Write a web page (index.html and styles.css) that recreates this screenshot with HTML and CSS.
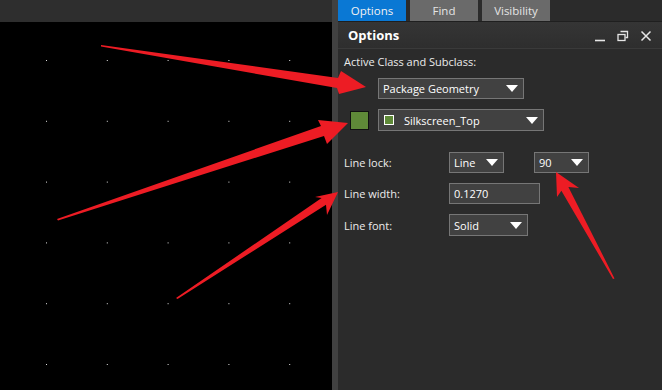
FILE: index.html
```html
<!DOCTYPE html>
<html lang="en">
<head>
    <meta charset="UTF-8">
    <meta name="viewport" content="width=device-width, initial-scale=1.0">
    <title>Options</title>
    <link rel="stylesheet" href="styles.css">
</head>
<body>
    <div class="app">
        <div class="work">
            <div class="topbar"></div>
            <div class="canvas">
                <svg class="grid" width="332" height="368">
                    <defs>
                        <pattern id="dots" x="46" y="38" width="60.8" height="60.8" patternUnits="userSpaceOnUse">
                            <rect x="0" y="0" width="1" height="1" fill="#e0e0e0"/>
                        </pattern>
                    </defs>
                    <rect width="332" height="368" fill="url(#dots)"/>
                </svg>
            </div>
        </div>

        <div class="divider"></div>

        <div class="panel">
            <div class="tabs">
                <div class="tab active">Options</div>
                <div class="tab">Find</div>
                <div class="tab">Visibility</div>
            </div>

            <div class="panel-head">
                <span class="panel-title">Options</span>
                <div class="win-btns">
                    <svg width="12" height="12" viewBox="0 0 12 12"><path d="M1 10.5h10" stroke="#e6e6e6" stroke-width="1.6"/></svg>
                    <svg width="12" height="12" viewBox="0 0 12 12">
                        <path d="M3.5 1.5h7v6h-2" fill="none" stroke="#e6e6e6" stroke-width="1.3"/>
                        <rect x="1" y="4.5" width="7" height="6" fill="none" stroke="#e6e6e6" stroke-width="1.3"/>
                    </svg>
                    <svg width="12" height="12" viewBox="0 0 12 12"><path d="M1.5 1.5l9 9M10.5 1.5l-9 9" stroke="#e6e6e6" stroke-width="1.5"/></svg>
                </div>
            </div>

            <div class="body">
                <div class="caption">Active Class and Subclass:</div>

                <div class="select wide-1">
                    <span>Package Geometry</span>
                    <i class="arrow"></i>
                </div>

                <div class="sub-row">
                    <div class="swatch"></div>
                    <div class="select wide-2">
                        <span class="mini-swatch"></span>
                        <span>Silkscreen_Top</span>
                        <i class="arrow"></i>
                    </div>
                </div>

                <div class="form">
                    <div class="label">Line lock:</div>
                    <div class="pair">
                        <div class="select small"><span>Line</span><i class="arrow"></i></div>
                        <div class="select small"><span>90</span><i class="arrow"></i></div>
                    </div>

                    <div class="label">Line width:</div>
                    <div class="field">0.1270</div>

                    <div class="label">Line font:</div>
                    <div class="select font"><span>Solid</span><i class="arrow"></i></div>
                </div>
            </div>
        </div>
    </div>

    <!-- annotation arrows -->
    <svg class="marks" width="662" height="390">
        <polygon points="101,45 338,78 341,71 366,87 339,94 337,88 101,46.5"/>
        <polygon points="57,219 321,126 318,120 348,123 327,144 324,136 58,220.5"/>
        <polygon points="176,298 321.6,198 315,197 338,192 327,215 326,204.7 177.5,299"/>
        <polygon points="613,279 561.4,190.7 557,197 556,172 579,188 568.4,186.9 614.5,278.5"/>
    </svg>
</body>
</html>
```

FILE: styles.css
```css
* {
    margin: 0;
    padding: 0;
    box-sizing: border-box;
}

body {
    width: 662px;
    height: 390px;
    overflow: hidden;
    background: #000;
    font-family: "Open Sans", "Liberation Sans", sans-serif;
    font-size: 11px;
    color: #ececec;
}

.app {
    display: flex;
    height: 390px;
    position: relative;
}

/* left drawing area */
.work {
    width: 332px;
    display: flex;
    flex-direction: column;
}
.topbar {
    height: 22px;
    background: #2e2e2e;
}
.canvas {
    flex: 1;
    background: #000;
}
.grid {
    display: block;
}

.divider {
    width: 6px;
    background: #414141;
}

/* options panel */
.panel {
    flex: 1;
    background: #2b2b2b;
    display: flex;
    flex-direction: column;
}
.tabs {
    height: 22px;
    display: flex;
    gap: 4px;
    background: #2b2b2b;
    border-bottom: 1px solid #1f1f1f;
}
.tab {
    width: 68px;
    height: 21px;
    line-height: 21px;
    text-align: center;
    font-size: 11.5px;
    background: #6a6a6a;
    color: #e4e4e4;
}
.tab.active {
    background: #0a78d4;
    color: #f2f2f2;
}
.panel-head {
    height: 27px;
    display: flex;
    align-items: center;
    justify-content: space-between;
    padding: 0 10px 0 10px;
    background: linear-gradient(#353535, #2e2e2e);
    border-bottom: 1px solid #3a3a3a;
}
.panel-title {
    font-weight: bold;
    font-size: 13px;
    color: #fff;
}
.win-btns {
    display: flex;
    gap: 11px;
    padding-top: 2px;
}
.win-btns svg {
    display: block;
}

.body {
    padding: 5px 6px 0 6px;
}
.caption {
    line-height: 16px;
}

.select {
    height: 21px;
    display: flex;
    align-items: center;
    gap: 7px;
    padding: 0 5px 0 4px;
    background: #414141;
    border: 1px solid #767676;
    color: #fff;
    position: relative;
}
.select .arrow {
    margin-left: auto;
    width: 0;
    height: 0;
    border-left: 6px solid transparent;
    border-right: 6px solid transparent;
    border-top: 7px solid #fff;
}
.wide-1 {
    width: 146px;
    margin: 8px 0 0 34px;
}
.sub-row {
    display: flex;
    align-items: center;
    gap: 9px;
    margin: 10px 0 0 6px;
}
.swatch {
    width: 19px;
    height: 19px;
    background: #5f8a38;
    border: 1px solid #111;
}
.wide-2 {
    width: 166px;
    height: 22px;
    padding-left: 5px;
    gap: 10px;
}
.mini-swatch {
    width: 10px;
    height: 10px;
    background: #5f8a38;
    border: 1px solid #fff;
}

.form {
    display: grid;
    grid-template-columns: 105px auto;
    row-gap: 10px;
    align-items: center;
    margin-top: 21px;
}
.pair {
    display: flex;
    gap: 30px;
}
.small {
    width: 55px;
}
.field {
    width: 91px;
    height: 21px;
    line-height: 19px;
    padding-left: 4px;
    background: #414141;
    border: 1px solid #767676;
    color: #fff;
}
.font {
    width: 79px;
    height: 22px;
}

/* red callouts over everything */
.marks {
    position: absolute;
    left: 0;
    top: 0;
}
.marks polygon {
    fill: #ed1c24;
}
```
